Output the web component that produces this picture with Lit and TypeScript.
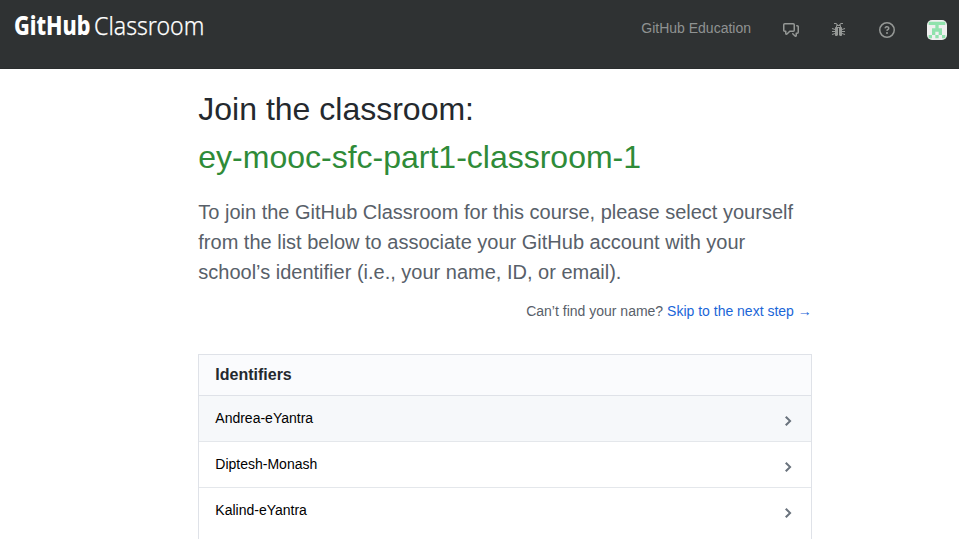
import { LitElement, html, css } from "lit";
import { customElement } from "lit/decorators.js";

const IDENTIFIERS = ["Andrea-eYantra", "Diptesh-Monash", "Kalind-eYantra"];

// Five by five symmetric avatar pattern, merged into one path.
const AVATAR = ["11111", "00100", "01110", "01010", "10101"]
  .flatMap((row, y) => [...row].map((c, x) => (c === "1" ? `M${5 + x * 10} ${5 + y * 10}h10v10h-10z` : "")))
  .join("");

@customElement("site-header")
class SiteHeader extends LitElement {
  static styles = css`
    :host { display: block; }
    header {
      box-sizing: border-box; height: 69px; padding: 0 12px 0 14px;
      background: #2f3233; border-bottom: 1px solid #2a2d2e;
      display: flex; justify-content: space-between; align-items: flex-start;
    }
    .logo { display: block; margin-top: 4px; fill: #fff; }
    .bold { font: 800 26px "Noto Sans", "Open Sans", sans-serif; }
    .light { font: 300 26px "Noto Sans", "Open Sans", sans-serif; stroke: #fff; stroke-width: 0.25px; }
    nav { display: flex; align-items: center; height: 20px; margin-top: 20px; color: #959896; }
    .edu { font-size: 14px; line-height: 20px; margin: -4px 32px 0 0; white-space: nowrap; color: #8f9292; }
    nav svg { display: block; fill: currentColor; margin-right: 32px; }
    nav .avatar { border-radius: 5px; margin-right: 0; }
  `;
  render() {
    return html`<header>
      <svg class="logo" width="200" height="44">
        <text class="bold" x="0" y="31.3" textLength="76.5" lengthAdjust="spacingAndGlyphs">GitHub</text>
        <text class="light" x="80" y="31.3" textLength="110.3" lengthAdjust="spacingAndGlyphs">Classroom</text>
      </svg>
      <nav>
        <span class="edu">GitHub Education</span>
        <svg width="16" height="16" viewBox="0 0 16 16"><path fill-rule="evenodd" d="M1.5 2.75a.25.25 0 0 1 .25-.25h8.5a.25.25 0 0 1 .25.25v5.5a.25.25 0 0 1-.25.25h-3.5a.75.75 0 0 0-.53.22L3.5 11.44V9.25a.75.75 0 0 0-.75-.75h-1a.25.25 0 0 1-.25-.25v-5.5zM1.75 1A1.75 1.75 0 0 0 0 2.75v5.5C0 9.216.784 10 1.75 10H2v1.543a1.457 1.457 0 0 0 2.487 1.03L7.061 10h3.189A1.75 1.75 0 0 0 12 8.25v-5.5A1.75 1.75 0 0 0 10.25 1h-8.5zM14.5 4.75a.25.25 0 0 0-.25-.25h-.5a.75.75 0 1 1 0-1.5h.5c.966 0 1.75.784 1.75 1.75v5.5A1.75 1.75 0 0 1 14.25 12H14v1.543a1.457 1.457 0 0 1-2.487 1.03L9.22 12.28a.75.75 0 1 1 1.06-1.06l2.22 2.22v-2.19a.75.75 0 0 1 .75-.75h1a.25.25 0 0 0 .25-.25v-5.5z"/></svg>
        <svg width="16" height="16" viewBox="0 0 16 16"><path fill-rule="evenodd" d="M11 10h3V9h-3V8l3.17-1.03-.34-.94L11 7V6c0-.55-.45-1-1-1V4c0-.48-.36-.88-.83-.97L10.2 2H12V1H9.8l-2 2h-.59L5.2 1H3v1h1.8l1.03 1.03C5.36 3.12 5 3.51 5 4v1c-.55 0-1 .45-1 1v1l-2.83-.97-.34.94L4 8v1H1v1h3v1L.83 12.03l.34.94L4 12v1c0 .55.45 1 1 1h1l1-1V6h1v7l1 1h1c.55 0 1-.45 1-1v-1l2.83.97.34-.94L11 11v-1zM9 5H6V4h3v1z"/></svg>
        <svg width="16" height="16" viewBox="0 0 16 16"><path fill-rule="evenodd" d="M8 1.5a6.5 6.5 0 1 0 0 13 6.5 6.5 0 0 0 0-13zM0 8a8 8 0 1 1 16 0A8 8 0 0 1 0 8zm9 3a1 1 0 1 1-2 0 1 1 0 0 1 2 0zM6.92 6.085c.081-.16.19-.299.34-.398.145-.097.371-.187.74-.187.28 0 .553.087.738.225A.613.613 0 0 1 9 6.25c0 .177-.04.264-.077.318a.956.956 0 0 1-.277.245c-.076.051-.158.1-.258.161l-.007.004a7.728 7.728 0 0 0-.313.195 2.416 2.416 0 0 0-.692.661.75.75 0 0 0 1.248.832.956.956 0 0 1 .276-.24 5.9 5.9 0 0 1 .297-.18c.335-.2.68-.44.926-.86.247-.3.377-.7.377-1.136 0-.77-.369-1.353-.862-1.725A2.765 2.765 0 0 0 8 4c-.631 0-1.155.16-1.572.438-.413.276-.68.638-.849.977a.75.75 0 1 0 1.342.67z"/></svg>
        <svg class="avatar" width="20" height="20" viewBox="0 0 60 60">
          <rect width="60" height="60" fill="#f0f0f0"/>
          <path d=${AVATAR} fill="#90e2ad"/>
        </svg>
      </nav>
    </header>`;
  }
}

@customElement("app-root")
class AppRoot extends LitElement {
  static styles = css`
    :host {
      display: flex; flex-direction: column; height: 539px; overflow: hidden; background: #fff;
      font-family: "Liberation Sans", Arial, sans-serif; color: #24292e;
    }
    site-header { flex: none; }
    main {
      flex: 1; display: flex; flex-direction: column; box-sizing: border-box;
      width: 613.5px; margin-left: 198.3px; padding-top: 16px;
    }
    h1 { margin: 0; font-size: 32px; line-height: 48px; font-weight: 400; }
    .course { color: #2f8b38; display: block; }
    .lead { margin: 16px 0 0; font-size: 20px; line-height: 30px; color: #586069; }
    .skip { margin: 14px 0 0; font-size: 14px; line-height: 21px; text-align: right; color: #586069; }
    a { color: #1b66d8; text-decoration: none; }
    .box { flex: 1; margin-top: 32px; border: 1px solid #dfe2e8; border-bottom: 0; }
    h2 { margin: 0; padding: 8px 16px; font-size: 16px; line-height: 24px; background: #fafbfd; }
    .row {
      display: flex; justify-content: space-between; height: 45px; padding: 0 19px 0 16px;
      border-top: 1px solid #e4e7eb; font-size: 14px; line-height: 45px; color: #000;
    }
    .row:first-of-type { background: #f6f8fa; border-top-color: #dfe2e8; }
    .row svg { display: block; margin-top: 17px; fill: #6a737d; }
  `;
  render() {
    return html`
      <site-header></site-header>
      <main>
        <h1>Join the classroom:<span class="course">ey-mooc-sfc-part1-classroom-1</span></h1>
        <p class="lead">To join the GitHub Classroom for this course, please select yourself from the list below to associate your GitHub account with your school’s identifier (i.e., your name, ID, or email).</p>
        <p class="skip">Can’t find your name? <a href="#">Skip to the next step →</a></p>
        <section class="box">
          <h2>Identifiers</h2>
          ${IDENTIFIERS.map((name) => html`<div class="row"><span>${name}</span>
            <svg width="8" height="16" viewBox="0 0 8 16"><path d="M7.5 8l-5 5L1 11.5 4.75 8 1 4.5 2.5 3l5 5z"/></svg></div>`)}
        </section>
      </main>`;
  }
}
